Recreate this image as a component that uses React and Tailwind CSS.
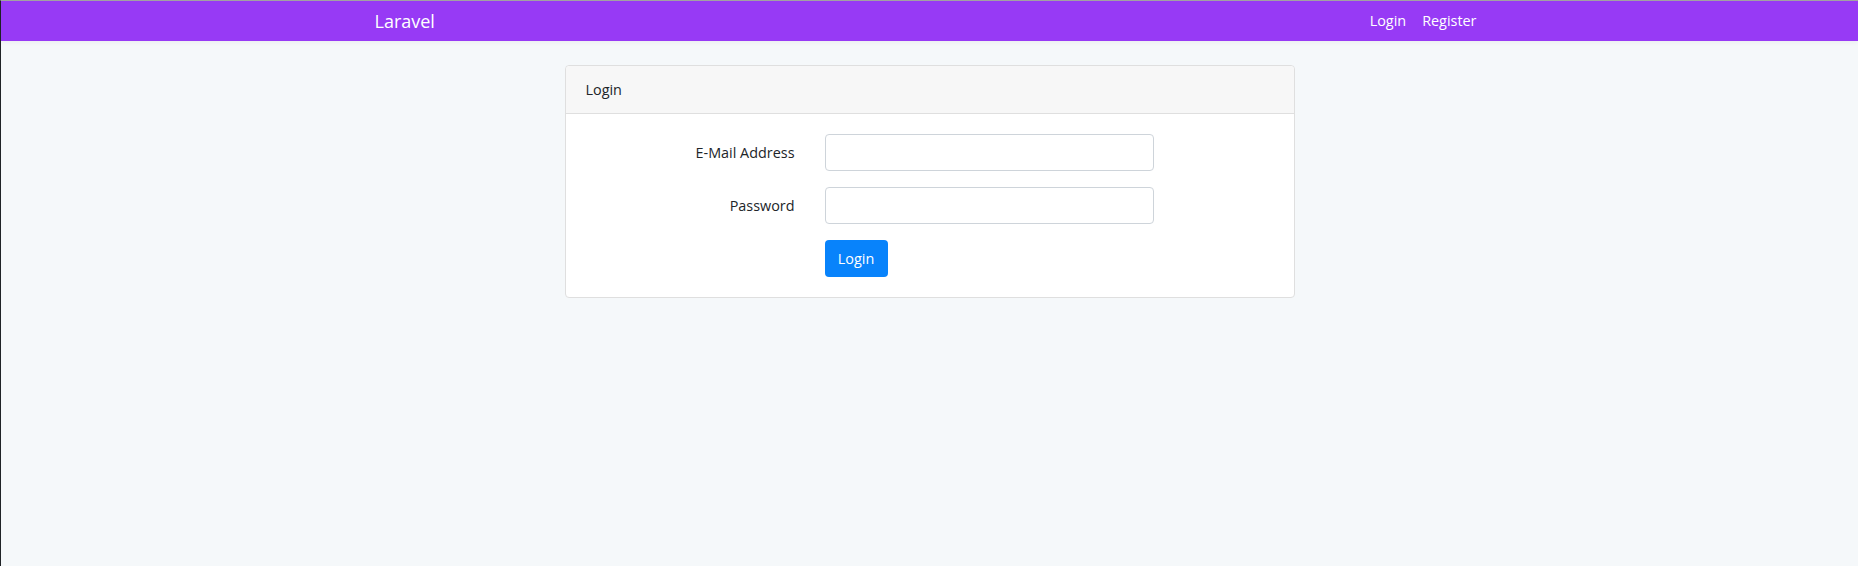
export default function App() {
  return (
    <div className="min-h-screen h-[566px] bg-[#f5f8fa] border-t border-t-[#a3a3a3] border-l border-l-[#1f2326] text-[#212529] font-['Open_Sans','Lato',sans-serif] text-[14.4px] leading-[1.6]">
      <nav className="h-[40px] bg-[#973af5] shadow-[0_2px_4px_rgba(0,0,0,0.04)]">
        <div className="w-[1140px] h-full mx-auto px-[15px] flex items-center justify-between">
          <a className="text-[18px] text-white pt-[1px]">Laravel</a>
          <div className="flex items-center">
            <a className="px-2 text-white">Login</a>
            <a className="px-2 text-white">Register</a>
          </div>
        </div>
      </nav>
      <main className="py-6">
        <div className="w-[730px] mx-auto bg-white border border-[#dfdfdf] rounded-[4px]">
          <div className="h-[48px] px-5 flex items-center bg-[#f7f7f7] border-b border-[#dfdfdf] rounded-t-[4px]">
            Login
          </div>
          <div className="p-5">
            <div className="flex items-center gap-[30px] mb-4">
              <label className="w-[209px] text-right">E-Mail Address</label>
              <div className="w-[329px] h-[37px] bg-white border border-[#ced4da] rounded-[4px]"></div>
            </div>
            <div className="flex items-center gap-[30px] mb-4">
              <label className="w-[209px] text-right">Password</label>
              <div className="w-[329px] h-[37px] bg-white border border-[#ced4da] rounded-[4px]"></div>
            </div>
            <div className="flex items-center gap-[30px]">
              <div className="w-[209px]"></div>
              <button className="h-[37px] w-[63px] bg-[#0883fb] text-white rounded-[4px]">Login</button>
            </div>
          </div>
        </div>
      </main>
    </div>
  );
}
